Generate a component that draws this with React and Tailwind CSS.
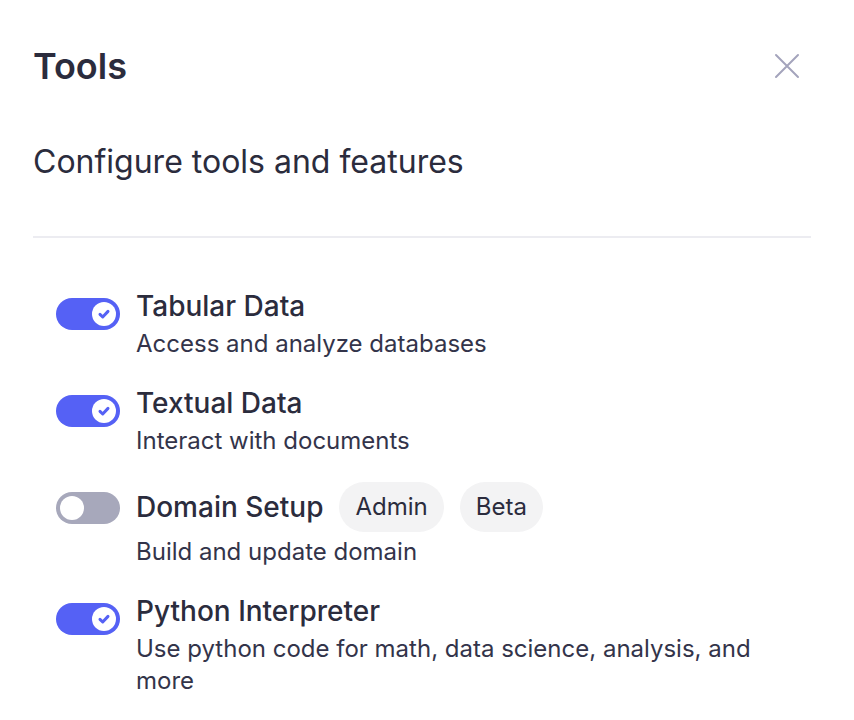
import React from 'react';

const tools = [
  { title: 'Tabular Data', desc: 'Access and analyze databases', on: true },
  { title: 'Textual Data', desc: 'Interact with documents', on: true },
  { title: 'Domain Setup', desc: 'Build and update domain', on: false, badges: ['Admin', 'Beta'] },
  { title: 'Python Interpreter', desc: 'Use python code for math, data science, analysis, and more', on: true },
];

function Toggle({ on }) {
  return (
    <div
      className={
        'mt-[10px] flex h-8 w-16 shrink-0 items-center rounded-full p-1 ' +
        (on ? 'justify-end bg-[#5561f5]' : 'justify-start bg-[#a7a8bb]')
      }
    >
      <div className="flex h-6 w-6 items-center justify-center rounded-full bg-white">
        {on ? (
          <svg width="18" height="18" viewBox="0 0 18 18" fill="none">
            <path d="M5 9.4l2.7 2.6 5.3-5.6" stroke="#5561f5" strokeWidth="3" strokeLinecap="round" strokeLinejoin="round" />
          </svg>
        ) : null}
      </div>
    </div>
  );
}

export default function App() {
  return (
    <div className="min-h-screen bg-white pl-[33px] pr-[43px] pt-[44px] font-['Inter',sans-serif] text-[#2b2c3d]">
      <div className="flex h-[44px] items-center justify-between">
        <h1 className="text-[36px] font-semibold leading-[44px]">Tools</h1>
        <button className="mr-[11px] text-[#a4a4bc]" aria-label="Close">
          <svg width="26" height="26" viewBox="0 0 26 26" fill="none">
            <path d="M2 2l22 22M24 2L2 24" stroke="currentColor" strokeWidth="2" strokeLinecap="round" />
          </svg>
        </button>
      </div>

      <p className="mt-[56px] text-[32px] leading-[36px]">Configure tools and features</p>

      <div className="mt-[56px] h-[2px] bg-[#ececf1]" />

      <div className="mt-[50px] flex flex-col gap-[25px] pl-[23px]">
        {tools.map((t) => (
          <div key={t.title} className="flex items-start gap-4">
            <Toggle on={t.on} />
            <div className="flex flex-col">
              <div className={'flex items-center gap-4 ' + (t.badges ? 'h-[50px]' : 'h-[36px]')}>
                <span className="text-[28px] font-medium leading-[36px]">{t.title}</span>
                {t.badges?.map((b) => (
                  <span key={b} className="flex h-[50px] items-center rounded-full bg-[#f3f3f4] px-4 text-[24px]">
                    {b}
                  </span>
                ))}
              </div>
              <p className="mt-1 max-w-[640px] text-[24px] leading-[32px] text-[#33344a]">{t.desc}</p>
            </div>
          </div>
        ))}
      </div>
    </div>
  );
}
